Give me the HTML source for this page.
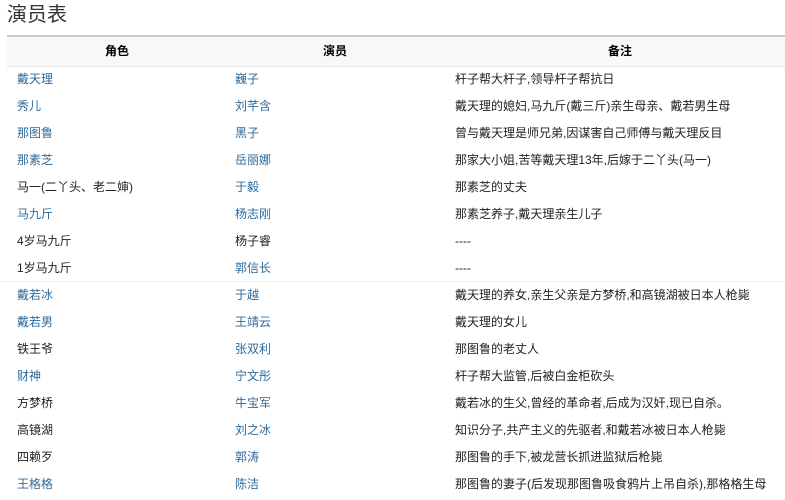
<!DOCTYPE html>
<html><head><meta charset="utf-8"><style>
body{margin:0;width:785px;height:500px;overflow:hidden;background:#fff;font-family:"Liberation Sans","Noto Sans CJK SC",sans-serif;}
h2{position:absolute;left:7px;top:2px;margin:0;font-size:20px;font-weight:normal;color:#333;line-height:26px}
.hd{position:absolute;left:7px;top:35px;width:778px;height:29px;border-top:2px solid #ccc;border-bottom:1px solid #e6e6e6;background:#f8f8f8;font-size:12px;font-weight:bold;color:#000}
.hd span{position:absolute;top:0;line-height:29px;transform:translateX(-50%)}
.r{position:absolute;left:0;width:785px;height:27px;font-size:12px;line-height:27px;color:#222}
.r span{position:absolute;top:0;white-space:nowrap}
.c1{left:17px}.c2{left:235px}.c3{left:455px}
.l{color:#2f6a99}
</style></head><body>
<h2>演员表</h2>
<div class="hd"><span style="left:110px">角色</span><span style="left:328px">演员</span><span style="left:613px">备注</span></div>
<div class="r" style="top:65.5px"><span class="c1 l">戴天理</span><span class="c2 l">巍子</span><span class="c3">杆子帮大杆子,领导杆子帮抗日</span></div>
<div class="r" style="top:92.5px"><span class="c1 l">秀儿</span><span class="c2 l">刘芊含</span><span class="c3">戴天理的媳妇,马九斤(戴三斤)亲生母亲、戴若男生母</span></div>
<div class="r" style="top:119.5px"><span class="c1 l">那图鲁</span><span class="c2 l">黑子</span><span class="c3">曾与戴天理是师兄弟,因谋害自己师傅与戴天理反目</span></div>
<div class="r" style="top:146.5px"><span class="c1 l">那素芝</span><span class="c2 l">岳丽娜</span><span class="c3">那家大小姐,苦等戴天理13年,后嫁于二丫头(马一)</span></div>
<div class="r" style="top:173.5px"><span class="c1">马一(二丫头、老二婶)</span><span class="c2 l">于毅</span><span class="c3">那素芝的丈夫</span></div>
<div class="r" style="top:200.5px"><span class="c1 l">马九斤</span><span class="c2 l">杨志刚</span><span class="c3">那素芝养子,戴天理亲生儿子</span></div>
<div class="r" style="top:227.5px"><span class="c1">4岁马九斤</span><span class="c2">杨子睿</span><span class="c3">----</span></div>
<div class="r" style="top:254.5px"><span class="c1">1岁马九斤</span><span class="c2 l">郭信长</span><span class="c3">----</span></div>
<div class="r" style="top:281.5px;border-top:1px solid #f0f0f0;margin-top:-1px"><span class="c1 l">戴若冰</span><span class="c2 l">于越</span><span class="c3">戴天理的养女,亲生父亲是方梦桥,和高镜湖被日本人枪毙</span></div>
<div class="r" style="top:308.5px"><span class="c1 l">戴若男</span><span class="c2 l">王靖云</span><span class="c3">戴天理的女儿</span></div>
<div class="r" style="top:335.5px"><span class="c1">铁王爷</span><span class="c2 l">张双利</span><span class="c3">那图鲁的老丈人</span></div>
<div class="r" style="top:362.5px"><span class="c1 l">财神</span><span class="c2 l">宁文彤</span><span class="c3">杆子帮大监管,后被白金柜砍头</span></div>
<div class="r" style="top:389.5px"><span class="c1">方梦桥</span><span class="c2 l">牛宝军</span><span class="c3">戴若冰的生父,曾经的革命者,后成为汉奸,现已自杀。</span></div>
<div class="r" style="top:416.5px"><span class="c1">高镜湖</span><span class="c2 l">刘之冰</span><span class="c3">知识分子,共产主义的先驱者,和戴若冰被日本人枪毙</span></div>
<div class="r" style="top:443.5px"><span class="c1">四赖歹</span><span class="c2 l">郭涛</span><span class="c3">那图鲁的手下,被龙营长抓进监狱后枪毙</span></div>
<div class="r" style="top:470.5px"><span class="c1 l">王格格</span><span class="c2 l">陈洁</span><span class="c3">那图鲁的妻子(后发现那图鲁吸食鸦片上吊自杀),那格格生母</span></div>
</body></html>
